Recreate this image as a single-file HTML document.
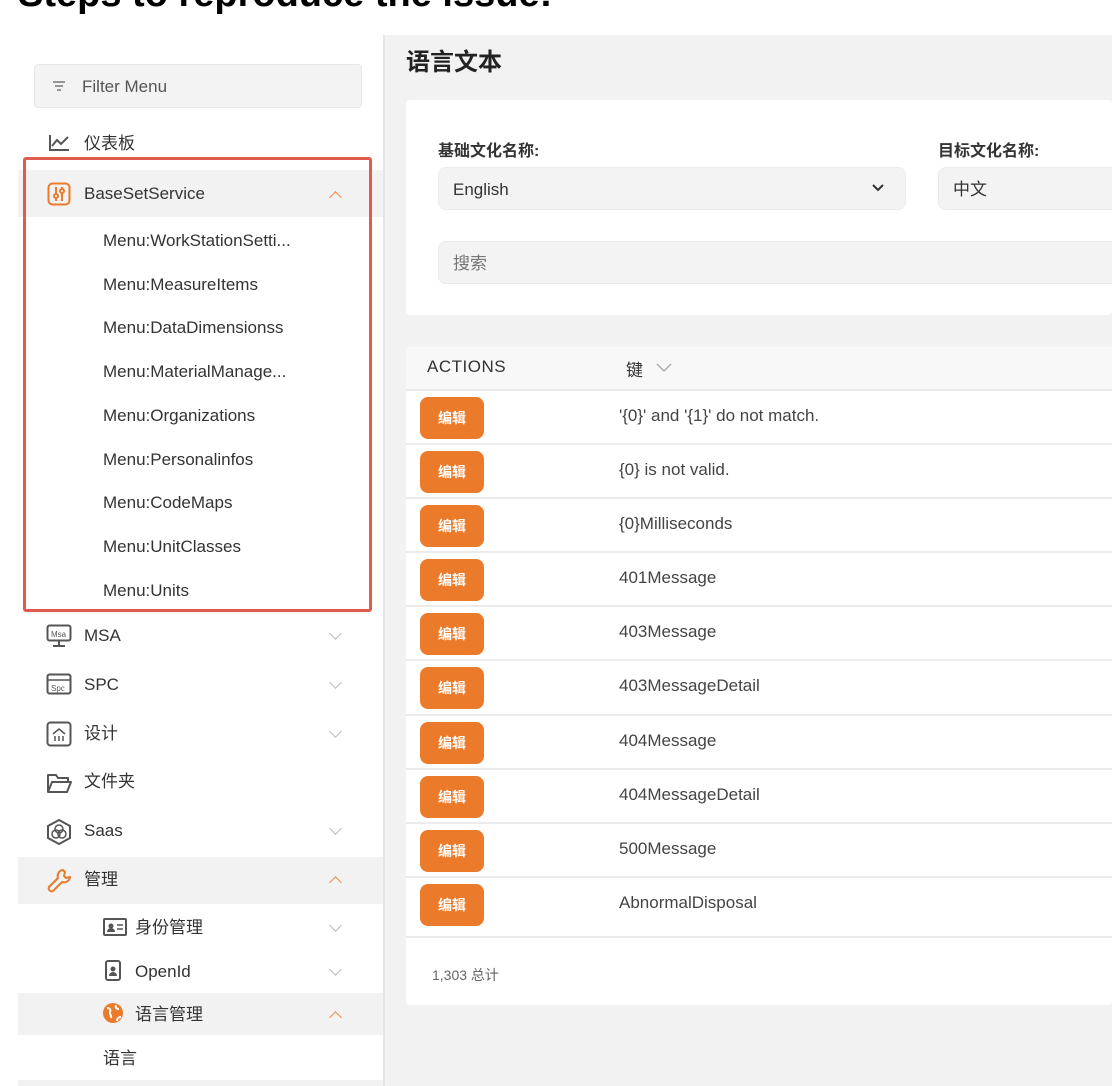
<!DOCTYPE html>
<html><head><meta charset="utf-8"><style>
*{margin:0;padding:0;box-sizing:border-box}
body{width:1112px;height:1086px;overflow:hidden;background:#fff;position:relative;font-family:"Liberation Sans","Noto Sans CJK SC",sans-serif;color:#333}
.a{position:absolute}
.h{left:18px;top:-25px;font-size:38px;font-weight:bold;color:#000;line-height:1;white-space:nowrap}
.side{left:18px;top:35px;width:365px;height:1051px;background:#fff}
.main{left:383px;top:35px;width:729px;height:1051px;background:#f2f2f2;border-left:2px solid #e6e6e6}
.t{font-size:17px;line-height:20px;white-space:nowrap}
.hl{background:#f2f2f2;left:18px;width:365px}
.chev{width:9px;height:9px;border-right:1.5px solid #bbb;border-bottom:1.5px solid #bbb;transform:rotate(45deg)}
.up{border-color:#ef8a4a;transform:rotate(225deg)}
.row{left:406px;width:706px;height:54px;border-top:2px solid #ebebeb;background:#fff}
.btn{position:absolute;left:14px;top:6px;width:64px;height:42px;background:#ec7a2b;border-radius:8px;color:#fff;font-size:14px;font-weight:bold;text-align:center;line-height:42px}
.key{position:absolute;left:213px;top:15px;font-size:17px;color:#444;white-space:nowrap}
</style></head><body>
<div class="a h">Steps to reproduce the issue:</div>
<div class="a side"></div>
<div class="a main"></div>

<div class="a" style="left:34px;top:64px;width:328px;height:44px;background:#f3f3f3;border:1px solid #e8e8e8;border-radius:4px"></div>
<svg class="a" style="left:52px;top:80px" width="14" height="12"><path d="M1 2h12M3 6h8M5 10h4" stroke="#777" stroke-width="1.4"/></svg>
<div class="a t" style="left:82px;top:77px;color:#555">Filter Menu</div>

<svg class="a" style="left:48px;top:134px" width="22" height="18"><path d="M2 1v15h19M4 12l5-6 4 4 7-7" stroke="#555" stroke-width="2" fill="none"/></svg>
<div class="a t" style="left:84px;top:134px">仪表板</div>

<div class="a hl" style="top:170px;height:47px"></div>
<svg class="a" style="left:47px;top:182px" width="24" height="24"><rect x="1.5" y="1.5" width="21" height="21" rx="4" stroke="#ec7a2b" stroke-width="2" fill="none"/><path d="M9 5v14M15 5v14" stroke="#ec7a2b" stroke-width="2"/><circle cx="9" cy="14" r="2" fill="#fff" stroke="#ec7a2b" stroke-width="2"/><circle cx="15" cy="9" r="2" fill="#fff" stroke="#ec7a2b" stroke-width="2"/></svg>
<div class="a t" style="left:84px;top:184px">BaseSetService</div>
<div class="a chev up" style="left:331px;top:193px"></div>

<div class="a t" style="left:103px;top:231px">Menu:WorkStationSetti...</div>
<div class="a t" style="left:103px;top:275px">Menu:MeasureItems</div>
<div class="a t" style="left:103px;top:318px">Menu:DataDimensionss</div>
<div class="a t" style="left:103px;top:362px">Menu:MaterialManage...</div>
<div class="a t" style="left:103px;top:406px">Menu:Organizations</div>
<div class="a t" style="left:103px;top:450px">Menu:Personalinfos</div>
<div class="a t" style="left:103px;top:493px">Menu:CodeMaps</div>
<div class="a t" style="left:103px;top:537px">Menu:UnitClasses</div>
<div class="a t" style="left:103px;top:581px">Menu:Units</div>
<div class="a" style="left:23px;top:157px;width:349px;height:455px;border:3px solid #e05a4e;border-radius:3px"></div>

<svg class="a" style="left:46px;top:624px" width="26" height="24"><rect x="1.5" y="1.5" width="23" height="15" rx="2" stroke="#555" stroke-width="2" fill="none"/><path d="M13 17v4M7 22h12" stroke="#555" stroke-width="2"/><text x="5" y="13" font-size="8" fill="#555" font-family="Liberation Sans">Msa</text></svg>
<div class="a t" style="left:84px;top:626px">MSA</div><div class="a chev" style="left:331px;top:629px"></div>
<svg class="a" style="left:46px;top:673px" width="26" height="22"><rect x="1.5" y="1.5" width="23" height="19" rx="2" stroke="#555" stroke-width="2" fill="none"/><path d="M2 7h22" stroke="#555" stroke-width="1.5"/><text x="5" y="18" font-size="8" fill="#555" font-family="Liberation Sans">Spc</text></svg>
<div class="a t" style="left:84px;top:675px">SPC</div><div class="a chev" style="left:331px;top:678px"></div>
<svg class="a" style="left:46px;top:721px" width="26" height="26"><rect x="1.5" y="1.5" width="23" height="23" rx="3" stroke="#555" stroke-width="2" fill="none"/><path d="M7 13l6-5 6 5M9 15v5M13 15v5M17 15v5" stroke="#555" stroke-width="1.5" fill="none"/></svg>
<div class="a t" style="left:84px;top:724px">设计</div><div class="a chev" style="left:331px;top:727px"></div>
<svg class="a" style="left:46px;top:772px" width="26" height="22"><path d="M2 20V3h8l2 3h10v4M2 20l4-10h19l-4 10z" stroke="#555" stroke-width="2" fill="none" stroke-linejoin="round"/></svg>
<div class="a t" style="left:84px;top:772px">文件夹</div>
<svg class="a" style="left:46px;top:818px" width="26" height="28"><path d="M13 2l11 6v12l-11 6-11-6V8z" stroke="#555" stroke-width="2" fill="none"/><circle cx="13" cy="11" r="4" stroke="#555" stroke-width="1.5" fill="none"/><circle cx="10" cy="16" r="4" stroke="#555" stroke-width="1.5" fill="none"/><circle cx="16" cy="16" r="4" stroke="#555" stroke-width="1.5" fill="none"/></svg>
<div class="a t" style="left:84px;top:821px">Saas</div><div class="a chev" style="left:331px;top:824px"></div>

<div class="a hl" style="top:857px;height:47px"></div>
<svg class="a" style="left:46px;top:868px" width="26" height="26"><path d="M17 2a6 6 0 0 0-5 8L3 19a3 3 0 0 0 4 4l9-9a6 6 0 0 0 8-5l-4 1-2-2 1-4z" stroke="#ec7a2b" stroke-width="2" fill="none" stroke-linejoin="round"/></svg>
<div class="a t" style="left:84px;top:870px">管理</div><div class="a chev up" style="left:331px;top:878px"></div>

<svg class="a" style="left:103px;top:918px" width="24" height="18"><rect x="1" y="1" width="22" height="16" rx="1" stroke="#555" stroke-width="2" fill="none"/><circle cx="8" cy="8" r="2.5" fill="#555"/><path d="M4 14a4 4 0 0 1 8 0z" fill="#555"/><path d="M14 7h6M14 11h6" stroke="#555" stroke-width="1.6"/></svg>
<div class="a t" style="left:135px;top:918px">身份管理</div><div class="a chev" style="left:331px;top:921px"></div>
<svg class="a" style="left:105px;top:960px" width="18" height="22"><rect x="1" y="1" width="14" height="19" rx="2" stroke="#555" stroke-width="2" fill="none"/><circle cx="8" cy="9" r="2.5" fill="#555"/><path d="M4 16a4 4 0 0 1 8 0z" fill="#555"/></svg>
<div class="a t" style="left:135px;top:962px">OpenId</div><div class="a chev" style="left:331px;top:965px"></div>

<div class="a hl" style="top:993px;height:42px"></div>
<svg class="a" style="left:102px;top:1002px" width="22" height="22"><circle cx="11" cy="11" r="10" fill="#ec7a2b"/><path d="M5 6c3 0 4 2 3 4s2 3 1 6M14 3c-1 3 1 4 3 4M15 19c0-3 2-4 4-4" stroke="#fff" stroke-width="2" fill="none"/></svg>
<div class="a t" style="left:135px;top:1005px">语言管理</div><div class="a chev up" style="left:331px;top:1013px"></div>
<div class="a t" style="left:103px;top:1049px">语言</div>
<div class="a" style="left:18px;top:1080px;width:365px;height:6px;background:#f2f2f2"></div>

<div class="a" style="left:406px;top:42px;font-size:24px;font-weight:bold;color:#222">语言文本</div>
<div class="a" style="left:406px;top:100px;width:706px;height:215px;background:#fff;border-radius:4px"></div>
<div class="a" style="left:438px;top:137px;font-size:16px;color:#333;font-weight:bold">基础文化名称:</div>
<div class="a" style="left:938px;top:137px;font-size:16px;color:#333;font-weight:bold">目标文化名称:</div>
<div class="a" style="left:438px;top:167px;width:468px;height:43px;background:#f3f3f3;border:1px solid #ebebeb;border-radius:8px"></div>
<div class="a t" style="left:453px;top:180px;font-size:17px">English</div>
<svg class="a" style="left:871px;top:183px" width="14" height="10"><path d="M2 2l5 5 5-5" stroke="#333" stroke-width="2" fill="none"/></svg>
<div class="a" style="left:938px;top:167px;width:200px;height:43px;background:#f3f3f3;border:1px solid #ebebeb;border-radius:8px"></div>
<div class="a t" style="left:953px;top:180px;font-size:17px">中文</div>
<div class="a" style="left:438px;top:241px;width:700px;height:43px;background:#f3f3f3;border:1px solid #ebebeb;border-radius:8px"></div>
<div class="a t" style="left:453px;top:254px;font-size:17px;color:#777">搜索</div>

<div class="a" style="left:406px;top:347px;width:706px;height:658px;background:#fff;border-radius:4px"></div>
<div class="a" style="left:406px;top:347px;width:706px;height:42px;background:#f8f8f8"></div>
<div class="a" style="left:427px;top:357px;font-size:17px;letter-spacing:0.5px;color:#333">ACTIONS</div>
<div class="a" style="left:626px;top:356px;font-size:17px;color:#333">键</div>
<svg class="a" style="left:656px;top:363px" width="16" height="10"><path d="M1 1l7 7 7-7" stroke="#aaa" stroke-width="1.4" fill="none"/></svg>

<div class="a row" style="top:389px"><div class="btn">编辑</div><div class="key">'{0}' and '{1}' do not match.</div></div>
<div class="a row" style="top:443px"><div class="btn">编辑</div><div class="key">{0} is not valid.</div></div>
<div class="a row" style="top:497px"><div class="btn">编辑</div><div class="key">{0}Milliseconds</div></div>
<div class="a row" style="top:551px"><div class="btn">编辑</div><div class="key">401Message</div></div>
<div class="a row" style="top:605px"><div class="btn">编辑</div><div class="key">403Message</div></div>
<div class="a row" style="top:659px"><div class="btn">编辑</div><div class="key">403MessageDetail</div></div>
<div class="a row" style="top:714px"><div class="btn">编辑</div><div class="key">404Message</div></div>
<div class="a row" style="top:768px"><div class="btn">编辑</div><div class="key">404MessageDetail</div></div>
<div class="a row" style="top:822px"><div class="btn">编辑</div><div class="key">500Message</div></div>
<div class="a row" style="top:876px;height:62px;border-bottom:2px solid #ebebeb"><div class="btn">编辑</div><div class="key">AbnormalDisposal</div></div>
<div class="a" style="left:432px;top:965px;font-size:14px;color:#666">1,303 总计</div>
</body></html>
